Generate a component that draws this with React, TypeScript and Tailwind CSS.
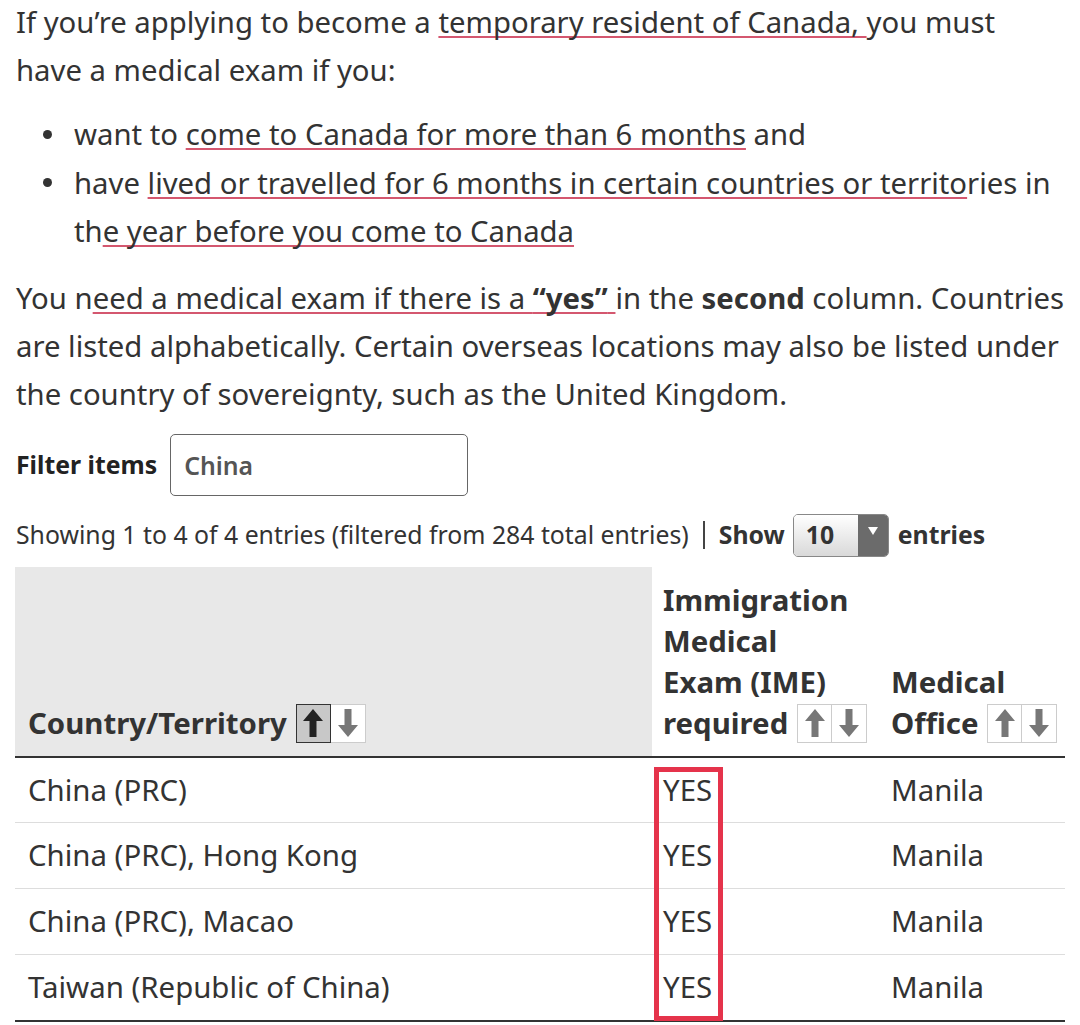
import type { ReactNode } from "react";

const rows = [
  "China (PRC)",
  "China (PRC), Hong Kong",
  "China (PRC), Macao",
  "Taiwan (Republic of China)",
];

function Mark({ children }: { children: ReactNode }) {
  return (
    <span className="underline decoration-[#d4576f] decoration-2 underline-offset-[3px] [text-decoration-skip-ink:none]">
      {children}
    </span>
  );
}

function Arrow({ dir, color }: { dir: "up" | "down"; color: string }) {
  return (
    <svg width="22" height="30" viewBox="0 0 22 30" className={dir === "down" ? "rotate-180" : ""}>
      <path d="M11 1 L21 13 H14.5 V29 H7.5 V13 H1 Z" fill={color} />
    </svg>
  );
}

function SortButtons({ active = false }: { active?: boolean }) {
  return (
    <span className="ml-[9px] inline-flex align-middle -mt-[4px]">
      <span
        className={
          active
            ? "flex h-[39px] w-[35px] items-center justify-center border border-[#333] bg-[#c8c8c8]"
            : "flex h-[39px] w-[35px] items-center justify-center border border-[#ccc] bg-white"
        }
      >
        <Arrow dir="up" color={active ? "#222" : "#777"} />
      </span>
      <span className="flex h-[39px] w-[35px] items-center justify-center border border-l-0 border-[#ccc] bg-white">
        <Arrow dir="down" color="#777" />
      </span>
    </span>
  );
}

function Bullet({ children }: { children: ReactNode }) {
  return (
    <li className="flex">
      <div className="flex h-[48.5px] w-[58px] shrink-0 items-center pl-[27px]">
        <span className="h-[9px] w-[9px] rounded-full bg-[#333]" />
      </div>
      <div className="whitespace-nowrap">{children}</div>
    </li>
  );
}

export default function App() {
  return (
    <div className="h-[1025px] w-[1080px] overflow-hidden bg-white font-['Noto_Sans',sans-serif] text-[#333]">
      <div className="px-4">
        <p className="-mt-[2px] whitespace-nowrap text-[29.3px] leading-[48px]">
          If you’re applying to become a <Mark>temporary resident of Canada, </Mark>you must
          <br />
          have a medical exam if you:
        </p>

        <ul className="mt-4 text-[29.3px] leading-[48.5px]">
          <Bullet>
            want to <Mark>come to Canada for more than 6 months</Mark> and
          </Bullet>
          <Bullet>
            have <Mark>lived or travelled for 6 months in certain countries or territo</Mark>ries in
            <br />
            th<Mark>e year before you come to Canada</Mark>
          </Bullet>
        </ul>

        <p className="mt-[18px] whitespace-nowrap text-[29.3px] leading-[48px]">
          You n
          <Mark>
            eed a medical exam if there is a <strong className="font-bold">“yes”</strong>{" "}
          </Mark>
          in the <strong className="font-bold">second</strong> column. Countries
          <br />
          are listed alphabetically. Certain overseas locations may also be listed under
          <br />
          the country of sovereignty, such as the United Kingdom.
        </p>

        <div className="mt-4 flex items-center">
          <label className="text-[24.8px] font-bold text-[#222]">Filter items</label>
          <input
            readOnly
            value="China"
            className="ml-[13px] h-[62px] w-[298px] rounded-[5px] border border-[#666] px-[13px] font-['Noto_Sans',sans-serif] text-[24.8px] font-semibold text-[#555] outline-none"
          />
        </div>

        <div className="mt-[18px] flex h-[43px] items-center whitespace-nowrap text-[24.8px]">
          <span>Showing 1 to 4 of 4 entries (filtered from 284 total entries)</span>
          <span className="mx-[14px] h-[28px] w-[2px] bg-[#444]" />
          <span className="font-bold">Show</span>
          <div className="ml-[8px] flex h-[43px] w-[96px] overflow-hidden rounded-[5px] border border-[#888]">
            <div className="flex flex-1 items-center bg-gradient-to-b from-white to-[#d9d9d9] pl-[12px] font-bold">
              10
            </div>
            <div className="flex w-[30px] items-start justify-center bg-[#6b6b6b] pt-[12px]">
              <svg width="10" height="8" viewBox="0 0 10 8">
                <path d="M0 0 H10 L5 8 Z" fill="#fff" />
              </svg>
            </div>
          </div>
          <span className="ml-[9px] font-bold">entries</span>
        </div>
      </div>

      <div className="relative ml-[15px] mt-[10px] w-[1050px]">
        <table className="w-full border-collapse text-[29.4px]">
          <thead>
            <tr className="border-b-2 border-[#333]">
              <th className="w-[637px] bg-[#e8e8e8] pb-[12px] pl-[13px] pt-[13px] text-left align-bottom font-bold leading-[41px]">
                Country/Territory
                <SortButtons active />
              </th>
              <th className="w-[227px] pb-[12px] pl-[11px] pt-[13px] text-left align-bottom font-bold leading-[41px]">
                Immigration
                <br />
                Medical
                <br />
                Exam (IME)
                <br />
                required
                <SortButtons />
              </th>
              <th className="pb-[12px] pl-[12px] pt-[13px] text-left align-bottom font-bold leading-[41px]">
                Medical
                <br />
                Office
                <SortButtons />
              </th>
            </tr>
          </thead>
          <tbody>
            {rows.map((name, i) => (
              <tr
                key={name}
                className={i === rows.length - 1 ? "h-[66px] border-b-2 border-[#333]" : "h-[66px] border-b border-[#ddd]"}
              >
                <td className="pl-[13px] align-middle">{name}</td>
                <td className="pl-[11px] align-middle">YES</td>
                <td className="pl-[12px] align-middle">Manila</td>
              </tr>
            ))}
          </tbody>
        </table>
        <div className="pointer-events-none absolute left-[639px] top-[200px] h-[254px] w-[69px] border-[5px] border-[#e5334b]" />
      </div>
    </div>
  );
}
